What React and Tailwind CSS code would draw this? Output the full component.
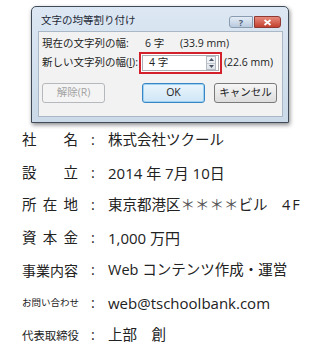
import React from "react";

const jp = { fontFamily: '"Open Sans", "Noto Sans CJK JP", sans-serif' };

function WinButton({ children, variant = "normal", className = "" }) {
  const styles = {
    normal:
      "border-[#7a7a7a] bg-gradient-to-b from-[#f6f6f6] to-[#dddddd] text-[#222]",
    primary:
      "border-[#3a86c4] bg-gradient-to-b from-[#eaf5fc] to-[#cfe6f6] text-[#222] shadow-[inset_0_0_0_1px_#9fd2f2]",
    disabled: "border-[#b5b9bd] bg-[#f4f4f4] text-[#a3a3a3]",
  };
  return (
    <div
      className={`flex h-[20px] w-[63px] items-center justify-center rounded-[3px] border text-[10.5px] ${styles[variant]} ${className}`}
    >
      {children}
    </div>
  );
}

function Dialog() {
  return (
    <div className="ml-[31px] pt-[6px]">
      <div className="flex h-[117px] w-[258px] flex-col rounded-t-[5px] border border-[#3f4b58] bg-gradient-to-b from-[#dce7f3] to-[#cbd9e8] shadow-[1px_2px_4px_rgba(0,0,0,0.45)]">
        {/* title bar */}
        <div className="flex h-[24px] items-start">
          <div className="mt-[6px] ml-[9px] text-[10.5px] leading-[14px] text-[#1e2a38]">
            文字の均等割り付け
          </div>
          <div className="mt-[9px] mr-[7px] ml-auto flex gap-[1px]">
            <div className="flex h-[12px] w-[24px] items-center justify-center rounded-l-[3px] border border-[#8a9cb0] bg-gradient-to-b from-[#e4edf6] to-[#b9cade] text-[9px] font-bold leading-none text-[#4d5e74]">
              ?
            </div>
            <div className="flex h-[12px] w-[27px] items-center justify-center rounded-r-[3px] border border-[#8e3a33] bg-gradient-to-b from-[#e6897c] to-[#c3402f]">
              <svg width="9" height="7" viewBox="0 0 9 7">
                <path d="M1.5 1 L7.5 6 M7.5 1 L1.5 6" stroke="#fff" strokeWidth="1.8" />
              </svg>
            </div>
          </div>
        </div>
        {/* client area */}
        <div className="ml-[6px] mr-[5px] h-[86px] border border-[#a9b7c6] bg-[#f2f2f2] pl-[3px] text-[10.5px] text-[#1e1e1e]">
          <div className="mt-[4px] flex h-[14px] items-center leading-[14px]">
            <span className="w-[103px]">現在の文字列の幅:</span>
            <span className="w-[35px]">6 字</span>
            <span>(33.9 mm)</span>
          </div>
          <div className="mt-[2px] flex h-[22px] items-center">
            <span className="w-[97px]">新しい文字列の幅(<span className="underline">I</span>):</span>
            <div className="flex h-[22px] w-[83px] items-center border-2 border-[#d3202b] bg-white p-[1px]">
              <div className="flex h-full w-full items-center border border-[#abadb3] pl-[6px]">
                <span>4 字</span>
                <div className="mr-[2px] ml-auto flex h-[14px] w-[10px] flex-col border border-[#b6bcc4] bg-gradient-to-b from-[#f4f6f8] to-[#dfe4ea]">
                  <div className="flex flex-1 items-center justify-center border-b border-[#c2c8d0]">
                    <svg width="5" height="3" viewBox="0 0 5 3">
                      <path d="M0 3 L2.5 0 L5 3 Z" fill="#4a5565" />
                    </svg>
                  </div>
                  <div className="flex flex-1 items-center justify-center">
                    <svg width="5" height="3" viewBox="0 0 5 3">
                      <path d="M0 0 L2.5 3 L5 0 Z" fill="#4a5565" />
                    </svg>
                  </div>
                </div>
              </div>
            </div>
            <span className="ml-[2px]">(22.6 mm)</span>
          </div>
          <div className="mt-[9px] flex">
            <WinButton variant="disabled">解除(R)</WinButton>
            <WinButton variant="primary" className="ml-[37px] w-[62px]">
              OK
            </WinButton>
            <WinButton className="ml-[9px]">キャンセル</WinButton>
          </div>
        </div>
      </div>
    </div>
  );
}

const rows = [
  { label: ["社", "名"], value: "株式会社ツクール" },
  { label: ["設", "立"], value: "2014 年 7月 10日", latin: true },
  { label: ["所", "在", "地"], value: "address" },
  { label: ["資", "本", "金"], value: "1,000 万円", latin: true },
  { label: "事業内容", size: "text-[14px]", value: "Web コンテンツ作成・運営" },
  { label: "お問い合わせ", size: "text-[9.5px]", value: "web@tschoolbank.com", latin: true },
  { label: "代表取締役", size: "text-[11.4px]", value: "上部\u3000創" },
];

export default function App() {
  return (
    <div className="h-[359px] w-[320px] overflow-hidden bg-white" style={jp}>
      <Dialog />
      <div className="mt-[1px] pl-[22px] text-[#222]">
        {rows.map((row, i) => (
          <div key={i} className="flex h-[32.5px] items-center">
            {Array.isArray(row.label) ? (
              <div className="flex w-[56px] justify-between text-[14.5px]">
                {row.label.map((c) => (
                  <span key={c}>{c}</span>
                ))}
              </div>
            ) : (
              <div className={`w-[56px] whitespace-nowrap ${row.size}`}>{row.label}</div>
            )}
            <div className="w-[30px] text-center text-[14.5px]">:</div>
            <div className={`whitespace-pre ${row.latin ? "text-[15px]" : "text-[14.5px]"}`}>
              {row.value === "address" ? (
                <>
                  {"東京都港区"}
                  <span className="text-[#555]">{"＊＊＊＊"}</span>
                  {"ビル\u3000"}
                  <span className="tracking-[2px]">4F</span>
                </>
              ) : (
                row.value
              )}
            </div>
          </div>
        ))}
      </div>
    </div>
  );
}
